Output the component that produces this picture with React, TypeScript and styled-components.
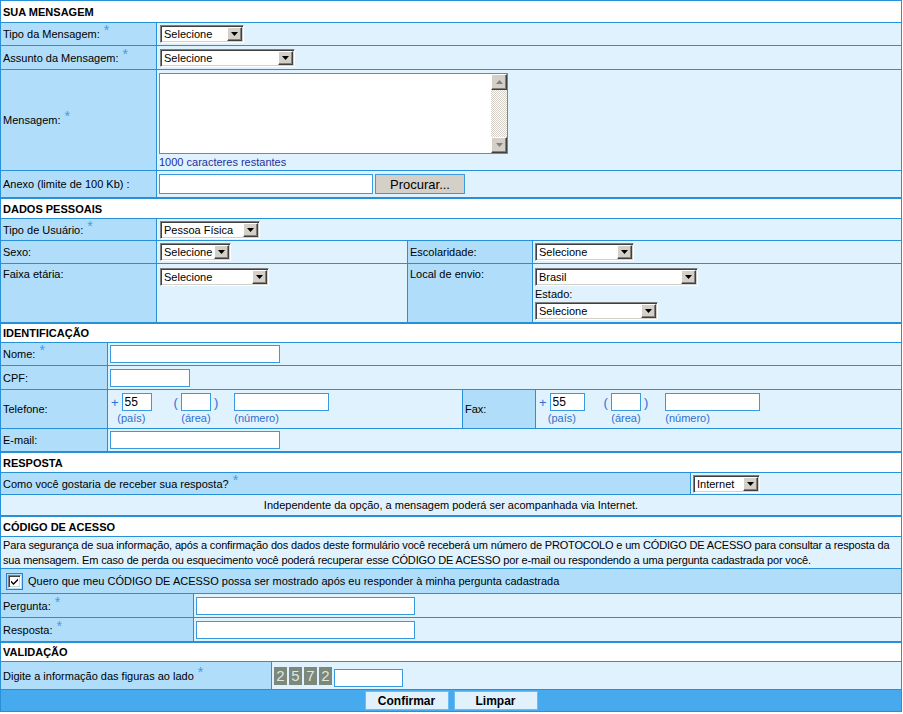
import React from 'react';
import styled, { createGlobalStyle } from 'styled-components';

const BLUE = '#2890d8';
const LABEL_BG = '#b0defa';
const FIELD_BG = '#e0f2fd';

const GlobalStyle = createGlobalStyle`
  html, body {
    margin: 0;
    padding: 0;
    background: #fff;
  }
  body {
    font-family: "Liberation Sans", Arial, sans-serif;
    font-size: 11px;
    color: #000;
  }
`;

const Form = styled.form`
  width: 902px;
  box-sizing: border-box;
  border: 1px solid ${BLUE};
`;

const Row = styled.div<{ $cols?: string; $h: number; $top?: number }>`
  display: grid;
  grid-template-columns: ${({ $cols }) => $cols ?? '1fr'};
  grid-template-rows: 100%;
  height: ${({ $h }) => $h}px;
  box-sizing: border-box;
  overflow: hidden;
  border-top: ${({ $top }) => $top ?? 1}px solid ${BLUE};
`;

const Header = styled.div<{ $h: number; $top?: number }>`
  height: ${({ $h }) => $h}px;
  box-sizing: border-box;
  border-top: ${({ $top }) => $top ?? 2}px solid ${BLUE};
  background: #fff;
  font-weight: bold;
  display: flex;
  align-items: center;
  padding-left: 2px;
`;

const Cell = styled.div<{ $label?: boolean; $valign?: 'top' | 'center'; $pad?: number; $padTop?: number; $span?: number }>`
  background: ${({ $label }) => ($label ? LABEL_BG : FIELD_BG)};
  display: flex;
  align-items: ${({ $valign }) => ($valign === 'top' ? 'flex-start' : 'center')};
  padding: ${({ $valign, $padTop }) => ($valign === 'top' ? `${$padTop ?? 4}px` : '0')} ${({ $pad }) => $pad ?? 2}px 0;
  grid-column: ${({ $span }) => ($span ? `span ${$span}` : 'auto')};
  min-width: 0;
  & + & {
    border-left: 1px solid ${BLUE};
  }
`;

const Req = styled.span`
  color: #3c9cf0;
  font-size: 14px;
  line-height: 0;
  position: relative;
  top: -4px;
  margin-left: 4px;
`;

/* ---------- selects ---------- */

const SelectBox = styled.span<{ $w: number }>`
  position: relative;
  display: inline-block;
  width: ${({ $w }) => $w}px;
  height: 18px;
  box-sizing: border-box;
  background: #fff;
  border: 1px solid;
  border-color: #808080 #fff #fff #808080;
  box-shadow: inset 1px 1px #404040, inset -1px -1px #d4d0c8;
`;

const NativeSelect = styled.select`
  appearance: none;
  -webkit-appearance: none;
  border: none;
  outline: none;
  background: transparent;
  width: 100%;
  height: 100%;
  padding: 0 0 0 3px;
  margin: 0;
  font-family: "Liberation Sans", Arial, sans-serif;
  font-size: 11px;
  color: #000;
`;

const DropButton = styled.span`
  position: absolute;
  top: 1px;
  right: 1px;
  bottom: 1px;
  width: 15px;
  box-sizing: border-box;
  background: #d4d0c8;
  border: 1px solid;
  border-color: #fff #404040 #404040 #fff;
  box-shadow: inset -1px -1px #808080;
  display: flex;
  align-items: center;
  justify-content: center;
  pointer-events: none;
`;

const Select = ({ width, value }: { width: number; value: string }) => (
  <SelectBox $w={width}>
    <NativeSelect defaultValue={value}>
      <option>{value}</option>
    </NativeSelect>
    <DropButton>
      <svg width="7" height="4" viewBox="0 0 7 4">
        <path d="M0 0h7L3.5 4z" fill="#000" />
      </svg>
    </DropButton>
  </SelectBox>
);

/* ---------- inputs ---------- */

const TextInput = styled.input<{ $w: number }>`
  width: ${({ $w }) => $w}px;
  height: 18px;
  box-sizing: border-box;
  border: 1px solid #3a9ae0;
  background: #fff;
  padding: 0 2px;
  margin: 0;
  font-family: "Liberation Sans", Arial, sans-serif;
  font-size: 12px;
  outline: none;
`;

const BrowseButton = styled.button`
  height: 20px;
  width: 90px;
  margin-left: 2px;
  background: #d4d0c8;
  border: 1px solid #3a9ae0;
  font-family: "Liberation Sans", Arial, sans-serif;
  font-size: 13px;
  color: #000;
  padding: 0;
`;

const TextAreaWrap = styled.div`
  display: flex;
  width: 349px;
  height: 81px;
  box-sizing: border-box;
  border: 1px solid #3a9ae0;
  background: #fff;
`;

const TextArea = styled.textarea`
  flex: 1;
  border: none;
  outline: none;
  resize: none;
  overflow: hidden;
  padding: 2px;
  font-family: "Liberation Sans", Arial, sans-serif;
  font-size: 12px;
`;

const ScrollBar = styled.div`
  width: 16px;
  display: flex;
  flex-direction: column;
  background: repeating-conic-gradient(#d4d0c8 0 25%, #fff 0 50%) 0 0 / 2px 2px;
`;

const ScrollButton = styled.span`
  width: 16px;
  height: 16px;
  box-sizing: border-box;
  background: #d4d0c8;
  border: 1px solid;
  border-color: #fff #404040 #404040 #fff;
  box-shadow: inset -1px -1px #808080;
  display: flex;
  align-items: center;
  justify-content: center;
`;

const ScrollTrack = styled.span`
  flex: 1;
`;

const Counter = styled.span`
  color: #1f2f9f;
  margin-top: 2px;
  line-height: 13px;
`;

const MessageField = styled.div`
  display: flex;
  flex-direction: column;
`;

/* ---------- phone ---------- */

const PhoneGrid = styled.div<{ $gap1: number; $gap2: number }>`
  display: grid;
  grid-template-columns: auto auto auto;
  & > :nth-child(3n + 2) {
    margin-left: ${({ $gap1 }) => $gap1}px;
  }
  & > :nth-child(3n) {
    margin-left: ${({ $gap2 }) => $gap2}px;
  }
`;

const PhonePart = styled.span<{ $align?: string }>`
  display: flex;
  align-items: center;
  justify-content: ${({ $align }) => $align ?? 'center'};
  gap: 1px;
`;

const Caption = styled.span<{ $align?: string }>`
  color: #2f6fd0;
  text-align: ${({ $align }) => $align ?? 'center'};
  line-height: 13px;
  margin-top: 1px;
`;

const Sign = styled.span`
  color: #2f6fd0;
  font-size: 13px;
  margin-right: 2px;
`;

const Paren = styled.span`
  color: #2f6fd0;
  font-size: 13px;
  margin: 0 2px;
`;

const Phone = ({ country, gap1, gap2 }: { country: number; gap1: number; gap2: number }) => (
  <PhoneGrid $gap1={gap1} $gap2={gap2}>
    <PhonePart>
      <Sign>+</Sign>
      <TextInput $w={country} defaultValue="55" />
    </PhonePart>
    <PhonePart>
      <Paren>(</Paren>
      <TextInput $w={30} />
      <Paren>)</Paren>
    </PhonePart>
    <PhonePart $align="flex-start">
      <TextInput $w={95} />
    </PhonePart>
    <Caption>(país)</Caption>
    <Caption>(área)</Caption>
    <Caption $align="left">(número)</Caption>
  </PhoneGrid>
);

/* ---------- misc ---------- */

const Stack = styled.div`
  display: flex;
  flex-direction: column;
  align-items: flex-start;
`;

const SmallLabel = styled.span`
  line-height: 13px;
  margin: 2px 0 1px;
`;

const Notice = styled.div`
  background: ${FIELD_BG};
  display: flex;
  align-items: center;
  justify-content: center;
`;

const Paragraph = styled.div`
  background: ${FIELD_BG};
  padding: 1px 3px 0 2px;
  line-height: 15px;
  letter-spacing: -0.16px;
`;

const CheckRow = styled.label`
  background: ${LABEL_BG};
  display: flex;
  align-items: center;
  padding-left: 5px;
  gap: 5px;
`;

const CheckFocus = styled.span`
  border: 1px solid #2a7fd0;
  padding: 1px;
  display: flex;
`;

const CheckBox = styled.span`
  width: 13px;
  height: 13px;
  box-sizing: border-box;
  background: #fff;
  border: 1px solid;
  border-color: #808080 #fff #fff #808080;
  box-shadow: inset 1px 1px #404040, inset -1px -1px #d4d0c8;
  display: flex;
  align-items: center;
  justify-content: center;
`;

const Captcha = styled.div`
  display: flex;
  align-items: center;
  gap: 2px;
`;

const Digit = styled.span`
  width: 13px;
  height: 18px;
  background: #7b887b;
  color: #dfe5df;
  font-size: 15px;
  display: flex;
  align-items: center;
  justify-content: center;
`;

const ButtonBar = styled.div`
  height: 22px;
  box-sizing: border-box;
  border-top: 1px solid ${BLUE};
  background: #48aaee;
  display: flex;
  align-items: center;
  justify-content: center;
  gap: 5px;
`;

const ActionButton = styled.button`
  width: 84px;
  height: 19px;
  box-sizing: border-box;
  background: #e1f2fd;
  border: 1px solid #6cbcf4;
  font-family: "Liberation Sans", Arial, sans-serif;
  font-size: 12px;
  font-weight: bold;
  color: #000;
  padding: 0;
`;

const App = () => {
  return (
    <>
      <GlobalStyle />
      <Form onSubmit={(e) => e.preventDefault()}>
        {/* SUA MENSAGEM */}
        <Header $h={21} $top={0}>SUA MENSAGEM</Header>
        <Row $cols="155px 1fr" $h={23}>
          <Cell $label>Tipo da Mensagem:<Req>*</Req></Cell>
          <Cell $pad={3}><Select width={84} value="Selecione" /></Cell>
        </Row>
        <Row $cols="155px 1fr" $h={24}>
          <Cell $label>Assunto da Mensagem:<Req>*</Req></Cell>
          <Cell $pad={3}><Select width={135} value="Selecione" /></Cell>
        </Row>
        <Row $cols="155px 1fr" $h={101}>
          <Cell $label>Mensagem:<Req>*</Req></Cell>
          <Cell $valign="top" $padTop={3} $pad={2}>
            <MessageField>
              <TextAreaWrap>
                <TextArea />
                <ScrollBar>
                  <ScrollButton>
                    <svg width="7" height="4" viewBox="0 0 7 4"><path d="M0 4h7L3.5 0z" fill="#808080" /></svg>
                  </ScrollButton>
                  <ScrollTrack />
                  <ScrollButton>
                    <svg width="7" height="4" viewBox="0 0 7 4"><path d="M0 0h7L3.5 4z" fill="#808080" /></svg>
                  </ScrollButton>
                </ScrollBar>
              </TextAreaWrap>
              <Counter>1000 caracteres restantes</Counter>
            </MessageField>
          </Cell>
        </Row>
        <Row $cols="155px 1fr" $h={27}>
          <Cell $label>Anexo (limite de 100 Kb) :</Cell>
          <Cell $pad={2}>
            <TextInput $w={214} style={{ height: 20 }} />
            <BrowseButton type="button">Procurar...</BrowseButton>
          </Cell>
        </Row>

        {/* DADOS PESSOAIS */}
        <Header $h={21}>DADOS PESSOAIS</Header>
        <Row $cols="155px 251px 125px 1fr" $h={22}>
          <Cell $label>Tipo de Usuário:<Req>*</Req></Cell>
          <Cell $pad={3} $span={3}><Select width={100} value="Pessoa Física" /></Cell>
        </Row>
        <Row $cols="155px 251px 125px 1fr" $h={23}>
          <Cell $label>Sexo:</Cell>
          <Cell $pad={3}><Select width={71} value="Selecione" /></Cell>
          <Cell $label>Escolaridade:</Cell>
          <Cell $pad={2}><Select width={99} value="Selecione" /></Cell>
        </Row>
        <Row $cols="155px 251px 125px 1fr" $h={59}>
          <Cell $label $valign="top">Faixa etária:</Cell>
          <Cell $valign="top" $pad={3}><Select width={109} value="Selecione" /></Cell>
          <Cell $label $valign="top">Local de envio:</Cell>
          <Cell $valign="top" $pad={2}>
            <Stack>
              <Select width={163} value="Brasil" />
              <SmallLabel>Estado:</SmallLabel>
              <Select width={123} value="Selecione" />
            </Stack>
          </Cell>
        </Row>

        {/* IDENTIFICAÇÃO */}
        <Header $h={20}>IDENTIFICAÇÃO</Header>
        <Row $cols="106px 355px 73px 1fr" $h={23}>
          <Cell $label>Nome:<Req>*</Req></Cell>
          <Cell $span={3}><TextInput $w={170} /></Cell>
        </Row>
        <Row $cols="106px 355px 73px 1fr" $h={24}>
          <Cell $label>CPF:</Cell>
          <Cell $span={3}><TextInput $w={80} /></Cell>
        </Row>
        <Row $cols="106px 355px 73px 1fr" $h={39}>
          <Cell $label>Telefone:</Cell>
          <Cell $pad={3}><Phone country={30} gap1={20} gap2={14} /></Cell>
          <Cell $label>Fax:</Cell>
          <Cell $pad={3}><Phone country={35} gap1={17} gap2={15} /></Cell>
        </Row>
        <Row $cols="106px 355px 73px 1fr" $h={23}>
          <Cell $label>E-mail:</Cell>
          <Cell $span={3}><TextInput $w={170} /></Cell>
        </Row>

        {/* RESPOSTA */}
        <Header $h={21}>RESPOSTA</Header>
        <Row $cols="689px 1fr" $h={22}>
          <Cell $label>Como você gostaria de receber sua resposta?<Req>*</Req></Cell>
          <Cell><Select width={67} value="Internet" /></Cell>
        </Row>
        <Row $h={21}>
          <Notice>Independente da opção, a mensagem poderá ser acompanhada via Internet.</Notice>
        </Row>

        {/* CÓDIGO DE ACESSO */}
        <Header $h={21}>CÓDIGO DE ACESSO</Header>
        <Row $h={32}>
          <Paragraph>
            Para segurança de sua informação, após a confirmação dos dados deste formulário você receberá um número de
            PROTOCOLO e um CÓDIGO DE ACESSO para consultar a resposta da sua mensagem. Em caso de perda ou esquecimento
            você poderá recuperar esse CÓDIGO DE ACESSO por e-mail ou respondendo a uma pergunta cadastrada por você.
          </Paragraph>
        </Row>
        <Row $h={25}>
          <CheckRow>
            <CheckFocus>
              <CheckBox>
                <svg width="7" height="7" viewBox="0 0 7 7">
                  <path d="M0 2.5l2.5 2.5L7 0.5v2L2.5 7 0 4.5z" fill="#000" />
                </svg>
              </CheckBox>
            </CheckFocus>
            Quero que meu CÓDIGO DE ACESSO possa ser mostrado após eu responder à minha pergunta cadastrada
          </CheckRow>
        </Row>
        <Row $cols="192px 1fr" $h={24}>
          <Cell $label>Pergunta:<Req>*</Req></Cell>
          <Cell><TextInput $w={219} /></Cell>
        </Row>
        <Row $cols="192px 1fr" $h={24}>
          <Cell $label>Resposta:<Req>*</Req></Cell>
          <Cell><TextInput $w={219} /></Cell>
        </Row>

        {/* VALIDAÇÃO */}
        <Header $h={20}>VALIDAÇÃO</Header>
        <Row $cols="270px 1fr" $h={28}>
          <Cell $label>Digite a informação das figuras ao lado<Req>*</Req></Cell>
          <Cell $pad={2}>
            <Captcha>
              {['2', '5', '7', '2'].map((d, i) => (
                <Digit key={i}>{d}</Digit>
              ))}
              <TextInput $w={69} style={{ marginTop: 4 }} />
            </Captcha>
          </Cell>
        </Row>
        <ButtonBar>
          <ActionButton type="submit">Confirmar</ActionButton>
          <ActionButton type="reset">Limpar</ActionButton>
        </ButtonBar>
      </Form>
    </>
  );
};

export default App;
